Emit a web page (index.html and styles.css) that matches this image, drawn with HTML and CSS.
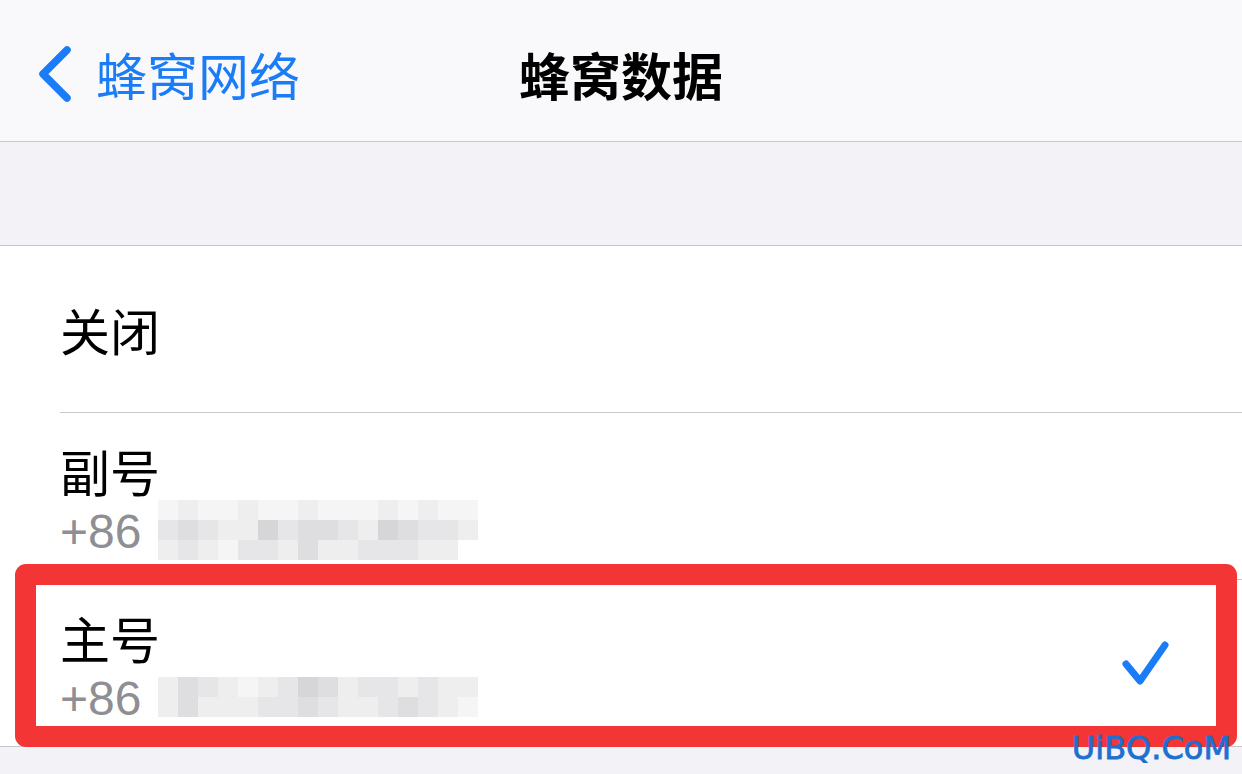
FILE: index.html
```html
<!DOCTYPE html>
<html lang="zh-CN">
<head>
    <meta charset="UTF-8">
    <meta name="viewport" content="width=device-width, initial-scale=1.0">
    <title>蜂窝数据</title>
    <link rel="stylesheet" href="styles.css">
</head>
<body>
    <div class="screen">
        <header class="navbar">
            <div class="nav-back">
                <svg class="chevron" viewBox="0 0 34 56" width="34" height="56">
                    <path d="M29 4 L5 28 L29 52" fill="none" stroke="#1a7cf6" stroke-width="7.5" stroke-linecap="round" stroke-linejoin="round"/>
                </svg>
                <span>蜂窝网络</span>
            </div>
            <h1 class="nav-title">蜂窝数据</h1>
            <div></div>
        </header>

        <div class="spacer"></div>

        <ul class="list">
            <li class="row">
                <span class="row-title">关闭</span>
            </li>
            <li class="row row-sub">
                <div class="row-text">
                    <div class="row-title">副号</div>
                    <div class="row-detail">
                        <span>+86</span>
                        <div class="mosaic">
                            <i class="m5"></i><i class="m4"></i><i class="m5"></i><i class="m5"></i><i class="m4"></i><i class="m5"></i><i class="m5"></i><i class="m4"></i><i class="m5"></i><i class="m5"></i><i class="m5"></i><i class="m4"></i><i class="m5"></i><i class="m4"></i><i class="m5"></i><i class="m5"></i>
                            <i class="m3"></i><i class="m2"></i><i class="m3"></i><i class="m4"></i><i class="m4"></i><i class="m1"></i><i class="m3"></i><i class="m2"></i><i class="m2"></i><i class="m3"></i><i class="m4"></i><i class="m1"></i><i class="m2"></i><i class="m3"></i><i class="m3"></i><i class="m4"></i>
                            <i class="m4"></i><i class="m3"></i><i class="m4"></i><i class="m5"></i><i class="m3"></i><i class="m3"></i><i class="m4"></i><i class="m2"></i><i class="m4"></i><i class="m4"></i><i class="m3"></i><i class="m3"></i><i class="m3"></i><i class="m4"></i><i class="m4"></i><i class="blank"></i>
                        </div>
                    </div>
                </div>
            </li>
            <li class="row row-sub selected">
                <div class="row-text">
                    <div class="row-title">主号</div>
                    <div class="row-detail">
                        <span>+86</span>
                        <div class="mosaic">
                            <i class="m4"></i><i class="m2"></i><i class="m3"></i><i class="m4"></i><i class="m5"></i><i class="m4"></i><i class="m3"></i><i class="m1"></i><i class="m2"></i><i class="m4"></i><i class="m3"></i><i class="m3"></i><i class="m4"></i><i class="m3"></i><i class="m4"></i><i class="m4"></i>
                            <i class="m4"></i><i class="m2"></i><i class="m4"></i><i class="m4"></i><i class="m4"></i><i class="m3"></i><i class="m3"></i><i class="m2"></i><i class="m3"></i><i class="m4"></i><i class="m4"></i><i class="m3"></i><i class="m2"></i><i class="m3"></i><i class="m4"></i><i class="m5"></i>
                        </div>
                    </div>
                </div>
                <svg class="check" viewBox="0 0 52 50" width="52" height="50">
                    <path d="M7 26 L21 43 L46 7" fill="none" stroke="#1a7cf6" stroke-width="7" stroke-linecap="round" stroke-linejoin="round"/>
                </svg>
                <div class="highlight"></div>
            </li>
        </ul>

        <div class="watermark">UiBQ.CoM</div>
    </div>
</body>
</html>
```

FILE: styles.css
```css
body {
    margin: 0;
    background-color: #f2f2f7;
    font-family: "Noto Sans CJK SC", "Noto Sans", sans-serif;
}
.screen {
    position: relative;
    width: 1242px;
    height: 774px;
    overflow: hidden;
}
.navbar {
    display: grid;
    grid-template-columns: 1fr auto 1fr;
    align-items: center;
    height: 142px;
    padding-top: 6px;
    box-sizing: border-box;
    background-color: #f9f9fb;
    border-bottom: 1px solid #c8c7cc;
}
.nav-back {
    display: flex;
    align-items: center;
    padding-left: 38px;
    color: #1a7cf6;
    font-size: 51px;
    line-height: 60px;
}
.chevron {
    margin-right: 24px;
}
.nav-title {
    margin: 0;
    font-size: 51px;
    font-weight: 700;
    line-height: 60px;
    color: #000;
}
.spacer {
    height: 103px;
    border-bottom: 1px solid #c8c7cc;
}
.list {
    list-style: none;
    margin: 0;
    padding: 0;
    background: #fff;
    border-bottom: 1px solid #c8c7cc;
}
.row {
    position: relative;
    display: flex;
    align-items: center;
    height: 166px;
    padding: 0 71px 0 60px;
    box-sizing: border-box;
}
.row + .row::before {
    content: "";
    position: absolute;
    top: -1px;
    left: 60px;
    right: 0;
    border-top: 1px solid #c8c7cc;
}
.row + .row {
    margin-top: 1px;
}
.row-title {
    font-size: 50px;
    line-height: 60px;
    color: #000;
}
.row-sub {
    align-items: flex-start;
    padding-top: 27px;
}
.row-text {
    flex: 1;
}
.row-detail {
    display: flex;
    align-items: center;
    height: 62px;
    font-family: "Liberation Sans", Arial, sans-serif;
    font-size: 48px;
    color: #8e8e93;
}
.mosaic {
    display: grid;
    grid-template-columns: repeat(16, 20px);
    grid-auto-rows: 20px;
    margin-left: 17px;
    margin-top: -2px;
}
.mosaic i { display: block; }
.m1 { background: #d6d6d8; }
.m2 { background: #dedee0; }
.m3 { background: #e6e6e8; }
.m4 { background: #eeeeef; }
.m5 { background: #f5f5f6; }
.blank { background: #fff; }
.check {
    margin-left: auto;
    align-self: center;
    margin-top: -27px;
}
.highlight {
    position: absolute;
    left: 15px;
    right: 5px;
    top: -16px;
    bottom: -1px;
    border: 21px solid #f43536;
    border-radius: 11px;
}
.watermark {
    position: absolute;
    right: 11px;
    bottom: 10px;
    font-family: "DejaVu Sans", sans-serif;
    font-size: 32px;
    line-height: 32px;
    color: #1f6fd0;
    -webkit-text-stroke: 0.8px #1f6fd0;
}
```
